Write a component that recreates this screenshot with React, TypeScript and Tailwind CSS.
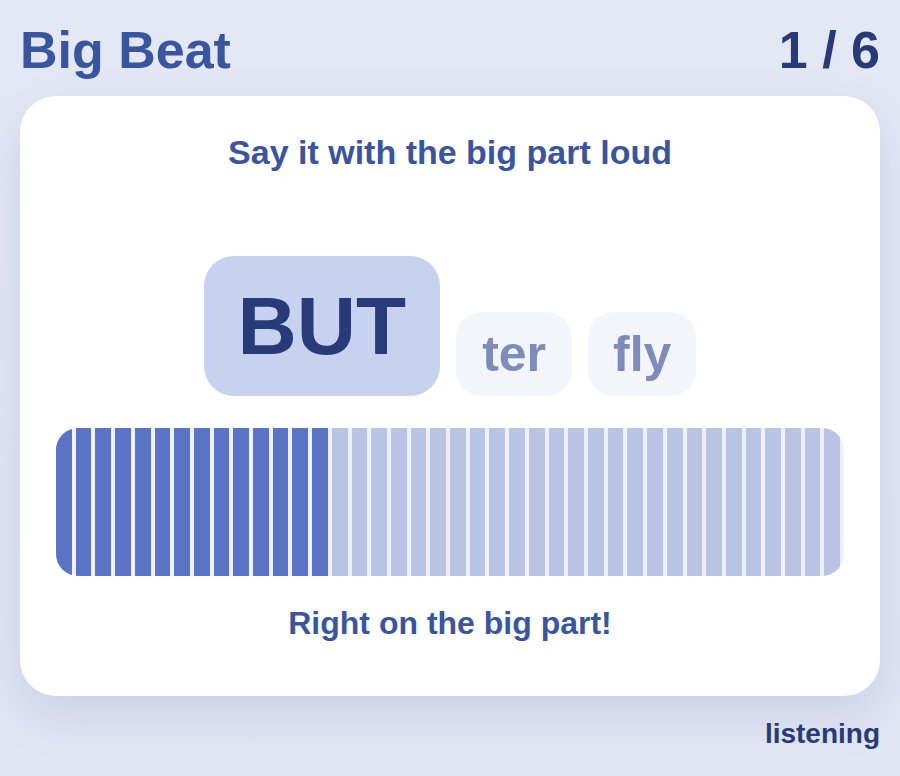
export default function App() {
  const bars = Array.from({ length: 40 }, (_, i) => i < 14);

  return (
    <div
      className="min-h-[776px] w-full bg-gradient-to-b from-[#e4e8f5] to-[#e1e6f4] px-5 pt-6"
      style={{ fontFamily: '"Liberation Sans", Arial, sans-serif' }}
    >
      <div className="flex items-center justify-between">
        <h1 className="text-[52px] font-bold leading-none text-[#3a55a0]">Big Beat</h1>
        <div className="text-[52px] font-bold leading-none text-[#283b78]">1 / 6</div>
      </div>

      <div className="mt-5 flex h-[600px] flex-col items-center rounded-[36px] bg-white px-9 pt-9 shadow-[0_18px_48px_rgba(70,90,160,0.16)]">
        <p className="text-[34px] font-bold leading-[1.2] text-[#3a55a0]">
          Say it with the big part loud
        </p>

        <div className="mt-[83px] flex items-end gap-4">
          <div className="flex h-[140px] items-center rounded-[30px] bg-[#c7d2f0] px-[34px] text-[82px] font-bold leading-none text-[#283b78]">
            BUT
          </div>
          <div className="flex h-[84px] items-center rounded-[26px] bg-[#f3f5fb] px-[26px] text-[50px] font-bold leading-none text-[#7f8cba]">
            ter
          </div>
          <div className="flex h-[84px] items-center rounded-[26px] bg-[#f3f5fb] px-[25px] text-[50px] font-bold leading-none text-[#7f8cba]">
            fly
          </div>
        </div>

        <div className="mt-8 flex h-[148px] w-full overflow-hidden rounded-[22px] bg-[#eef1fa]">
          {bars.map((on, i) => (
            <div
              key={i}
              className={`mr-[4px] flex-1 ${on ? "bg-[#5b73c4]" : "bg-[#b9c4e4]"}`}
            />
          ))}
        </div>

        <p className="mt-7 text-[32px] font-bold leading-[1.2] text-[#3a55a0]">
          Right on the big part!
        </p>
      </div>

      <div className="mt-6 text-right text-[28px] font-bold leading-none text-[#283b78]">
        listening
      </div>
    </div>
  );
}
